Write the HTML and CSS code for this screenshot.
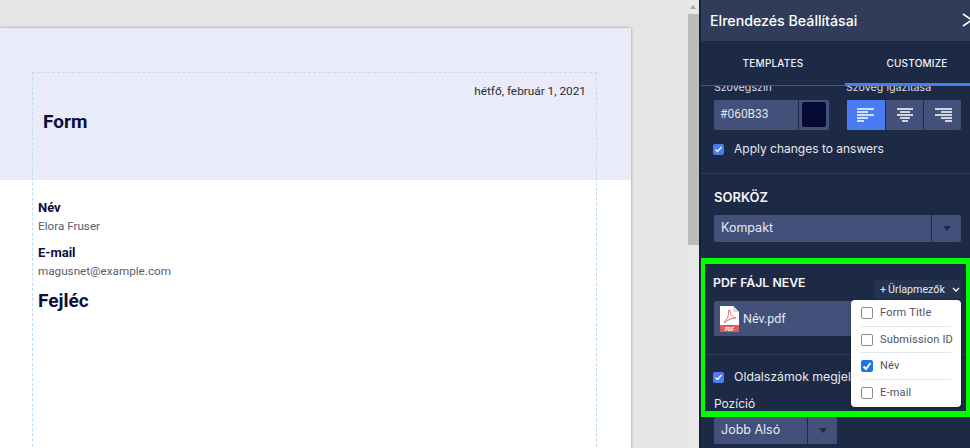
FILE: index.html
```html
<!DOCTYPE html>
<html lang="hu">
<head>
<meta charset="utf-8">
<title>Elrendezés Beállításai</title>
<link rel="stylesheet" href="styles.css">
</head>
<body>
<div class="app">
  <main class="canvas">
    <section class="page">
      <div class="page-head">
        <div class="date">hétfő, február 1, 2021</div>
        <h1 class="form-title">Form</h1>
      </div>
      <div class="page-body">
        <div class="field-label">Név</div>
        <div class="field-value">Elora Fruser</div>
        <div class="field-label second">E-mail</div>
        <div class="field-value">magusnet@example.com</div>
        <h2 class="heading">Fejléc</h2>
      </div>
      <div class="guide"></div>
    </section>
  </main>
  <div class="scrollbar">
    <div class="scroll-arrow"></div>
    <div class="scroll-thumb"></div>
  </div>
  <aside class="panel">
    <header class="panel-head">
      <span>Elrendezés Beállításai</span>
      <svg class="close" viewBox="0 0 12 14" width="12" height="14"><path d="M1 1l9 6-9 6" fill="none" stroke="#fff" stroke-width="1.6"/></svg>
    </header>
    <nav class="tabs">
      <div class="tab">TEMPLATES</div>
      <div class="tab active">CUSTOMIZE</div>
    </nav>
    <div class="scroll">
      <section class="sec sec-color">
        <div class="labels"><span class="lab-a">Szövegszín</span><span class="lab-b">Szöveg igazítása</span></div>
        <div class="color-row">
          <div class="hex"><span class="hex-val">#060B33</span><span class="swatch-box"><span class="swatch"></span></span></div>
          <div class="aligns">
            <div class="al on"><svg viewBox="0 0 18 15" width="18" height="15"><path d="M0 1h17M0 4h11M0 7h17M0 10h11M0 13h7" stroke="#fff" stroke-width="1.4"/></svg></div>
            <div class="al"><svg viewBox="0 0 18 15" width="18" height="15"><path d="M1 1h16M4 4h10M1 7h16M4 10h10M6 13h6" stroke="#fff" stroke-width="1.4"/></svg></div>
            <div class="al"><svg viewBox="0 0 18 15" width="18" height="15"><path d="M1 1h17M7 4h11M1 7h17M7 10h11M11 13h7" stroke="#fff" stroke-width="1.4"/></svg></div>
          </div>
        </div>
        <label class="check-row">
          <span class="chk"><svg viewBox="0 0 11 11" width="11" height="11"><path d="M2.5 5.5l2 2 4-4.500" fill="none" stroke="#fff" stroke-width="1.300"/></svg></span>
          <span>Apply changes to answers</span>
        </label>
      </section>
      <section class="sec sec-space">
        <h3 class="sec-title">SORKÖZ</h3>
        <div class="select wide"><span class="select-val">Kompakt</span><span class="select-btn"><i class="caret"></i></span></div>
      </section>
      <section class="sec sec-pdf">
        <div class="pdf-top">
          <h3 class="sec-title">PDF FÁJL NEVE</h3>
          <div class="add-btn"><span class="plus">+</span>Ürlapmezők<svg viewBox="0 0 8 6" width="8" height="6"><path d="M1 1l3 3 3-3" fill="none" stroke="#fff" stroke-width="1.400"/></svg></div>
        </div>
        <div class="pdf-input">
          <svg class="pdf-ico" viewBox="0 0 20 26" width="20" height="26">
            <path d="M1 0h13l6 6v20H1z" fill="#fff"/>
            <path d="M14 0l6 6h-6z" fill="#ddd"/>
            <path d="M1 19h19v7H1z" fill="#de5b5e"/>
            <path d="M5 16c3-2 5-6 4.500-11 0-1.500 1.500-1.500 1.500 0 0 3 2 6 6 7-3 0-7 1-9 3-1.500 1.500-3 2-3 1z" fill="none" stroke="#de5b5e" stroke-width="0.900"/>
            <text x="10.500" y="25" class="pdf-txt" text-anchor="middle">PDF</text>
          </svg>
          <span>Név.pdf</span>
        </div>
      </section>
      <section class="sec sec-pages">
        <label class="check-row">
          <span class="chk"><svg viewBox="0 0 11 11" width="11" height="11"><path d="M2.500 5.500l2 2 4-4.500" fill="none" stroke="#fff" stroke-width="1.300"/></svg></span>
          <span class="clip">Oldalszámok megjelenítése</span>
        </label>
        <div class="pos-label">Pozíció</div>
        <div class="select narrow"><span class="select-val">Jobb Alsó</span><span class="select-btn"><i class="caret"></i></span></div>
      </section>
    </div>
    <div class="highlight"></div>
    <div class="menu">
      <div class="opt"><span class="box"></span>Form Title</div>
      <div class="opt"><span class="box"></span>Submission ID</div>
      <div class="opt"><span class="box checked"><svg viewBox="0 0 12 12" width="12" height="12"><path d="M2.500 6.500l2.500 2.500 4.500-6" fill="none" stroke="#fff" stroke-width="2"/></svg></span>Név</div>
      <div class="opt"><span class="box"></span>E-mail</div>
    </div>
  </aside>
</div>
</body>
</html>
```
FILE: styles.css
```css
* { box-sizing: border-box; }
html, body { margin: 0; height: 100%; overflow: hidden; }
body { background: #e5e5e5; font-family: "Inter", "Liberation Sans", sans-serif; }
.app { display: flex; width: 970px; height: 448px; overflow: hidden; }

.canvas { width: 688px; flex: none; padding-top: 28px; overflow: hidden; }
.page { position: relative; width: 631px; height: 600px; background: #fff; box-shadow: 0 0 3px rgba(0,0,0,.35); }
.page-head { height: 152px; background: #e9ebf8; padding: 55px 45px 0 43px; }
.date { font: 11.800px/16px "Roboto", sans-serif; color: #2b2c33; text-align: right; }
.form-title { margin: 11px 0 0; font: 700 19px/24px "Roboto", sans-serif; color: #0a0f3c; }
.page-body { padding: 20px 38px; }
.field-label { font: 700 13px/16px "Roboto", sans-serif; color: #0a0f3c; }
.field-label.second { margin-top: 11px; }
.field-value { margin-top: 2px; font: 11.700px/16px "Roboto", sans-serif; color: #5a5d70; }
.heading { margin: 10px 0 0; font: 700 19px/24px "Roboto", sans-serif; color: #0a0f3c; }
.guide { position: absolute; left: 32px; top: 44px; width: 565px; height: 500px; border: 1px dashed #bcdcf5; pointer-events: none; }

.scrollbar { width: 11px; flex: none; background: #e8e8e8; display: flex; flex-direction: column; }
.scroll-arrow { height: 14px; position: relative; }
.scroll-arrow::after { content: ""; position: absolute; left: 2px; top: 5px; border: 3.500px solid transparent; border-top: 0; border-bottom: 4px solid #a8a8a8; }
.scroll-thumb { height: 231px; background: #bcbcbc; }

.panel { position: relative; width: 271px; flex: none; background: #1d2a45; color: #fff; border-left: 2px solid #17213a; display: flex; flex-direction: column; overflow: hidden; }
.panel-head { height: 41px; flex: none; background: #2f3d5b; display: flex; align-items: center; justify-content: space-between; padding: 0 0 1px 9px; font-size: 14.200px; font-weight: 500; white-space: nowrap; }
.close { margin-right: -4px; }
.tabs { display: flex; height: 45px; flex: none; border-bottom: 1px solid #46557a; }
.tab { width: 144px; flex: none; text-align: center; font-size: 10px; font-weight: 500; letter-spacing: .2px; line-height: 44px; color: #f2f4f8; }
.tab.active { width: 125px; border-bottom: 3px solid #4a7cf0; text-indent: 19px; height: 45px; white-space: nowrap; }
.scroll { flex: 1; overflow: hidden; font-size: 13px; }

.sec { padding-left: 13px; padding-right: 9px; }
.sec-color { display: flow-root; height: 88px; border-bottom: 1px solid #2e3b59; }
.labels { margin-top: -5px; display: flex; font-size: 10.700px; line-height: 14px; color: #d8dce6; white-space: nowrap; }
.lab-a { width: 132px; }
.color-row { display: flex; margin-top: 5px; }
.hex { width: 115px; height: 30px; background: #42507a; border-radius: 2px; display: flex; }
.hex-val { width: 86px; border-right: 1px solid #1d2a45; padding-left: 6px; font: 12px/29px "Roboto", sans-serif; color: #dfe3ec; }
.swatch-box { flex: 1; padding: 2px 3px; }
.swatch { display: block; width: 24px; height: 25px; background: #060b33; border-radius: 2px; }
.aligns { display: flex; margin-left: 18px; background: #42507a; border-radius: 2px; }
.al { width: 38px; height: 30px; display: flex; align-items: center; justify-content: center; border-left: 1px solid #1d2a45; }
.al:first-child { border-left: 0; }
.al.on { background: #4a7cf0; }
.check-row { display: flex; align-items: center; gap: 10px; margin: 11px 0 0 -1px; font-size: 12px; line-height: 16px; color: #e6e9f0; white-space: nowrap; }
.chk { width: 11px; height: 11px; background: #4a7cf0; border-radius: 2px; display: block; line-height: 0; }

.sec-space { height: 80px; padding-top: 15px; }
.sec-title { margin: 0; font-size: 13px; font-weight: 600; line-height: 16px; color: #f4f5f8; }
.select { display: flex; height: 27px; background: #42507a; border-radius: 2px; }
.select.wide { width: 247px; margin-top: 10px; }
.select.narrow { width: 123px; margin-top: 6px; }
.select-val { flex: 1; padding-left: 7px; font-size: 12.500px; line-height: 25px; color: #e6e9f0; }
.select-btn { width: 30px; border-left: 1px solid #1d2a45; display: flex; align-items: center; justify-content: center; }
.caret { display: block; border: 4px solid transparent; border-bottom: 0; border-top: 5px solid #1d2a45; }

.sec-pdf { height: 101px; padding-top: 21px; border-bottom: 1px solid #2e3b59; }
.pdf-top { display: flex; justify-content: space-between; align-items: flex-start; }
.pdf-top .sec-title { font-size: 12.300px; margin-left: -1px; }
.add-btn { width: 87px; height: 19px; margin-top: 5px; background: #26334f; border-radius: 2px; font: 10.700px/19px "Roboto", sans-serif; color: #e6e9f0; padding-left: 6px; display: flex; align-items: center; white-space: nowrap; }
.add-btn svg { margin-left: 7px; }
.plus { margin-right: 2px; }
.pdf-input { display: flex; align-items: center; gap: 4px; width: 247px; height: 35px; margin-top: 2px; padding-left: 5px; background: #42507a; border-radius: 2px; font: 12.500px/16px "Roboto", sans-serif; color: #e6e9f0; }
.pdf-txt { font: 700 5px "Roboto", sans-serif; fill: #fff; }

.sec-pages { padding-top: 2px; }
.sec-pages .check-row { margin-top: 12px; font-size: 12.300px; }
.clip { width: 117px; overflow: hidden; }
.pos-label { margin-top: 12px; font-size: 12px; line-height: 14px; color: #e6e9f0; }

.highlight { position: absolute; left: -2px; top: 258px; width: 273px; height: 159px; border: 6px solid #00ff00; border-radius: 3px; pointer-events: none; }
.menu { position: absolute; left: 150px; top: 300px; width: 110px; height: 107px; background: #fff; border-radius: 4px; padding: 0 10px; box-shadow: 0 1px 3px rgba(0,0,0,.3); }
.opt { display: flex; align-items: center; gap: 7px; height: 26.700px; border-bottom: 1px solid #e6e7f0; font: 400 11px/14px "Roboto", sans-serif; letter-spacing: .2px; color: #4f5266; white-space: nowrap; }
.opt:last-child { border-bottom: 0; }
.box { width: 12px; height: 12px; flex: none; border: 1px solid #8a8a8a; border-radius: 2px; background: #fff; line-height: 0; }
.box.checked { background: #1a73e8; border-color: #1a73e8; }
.box.checked svg { margin: -1px; }
```
